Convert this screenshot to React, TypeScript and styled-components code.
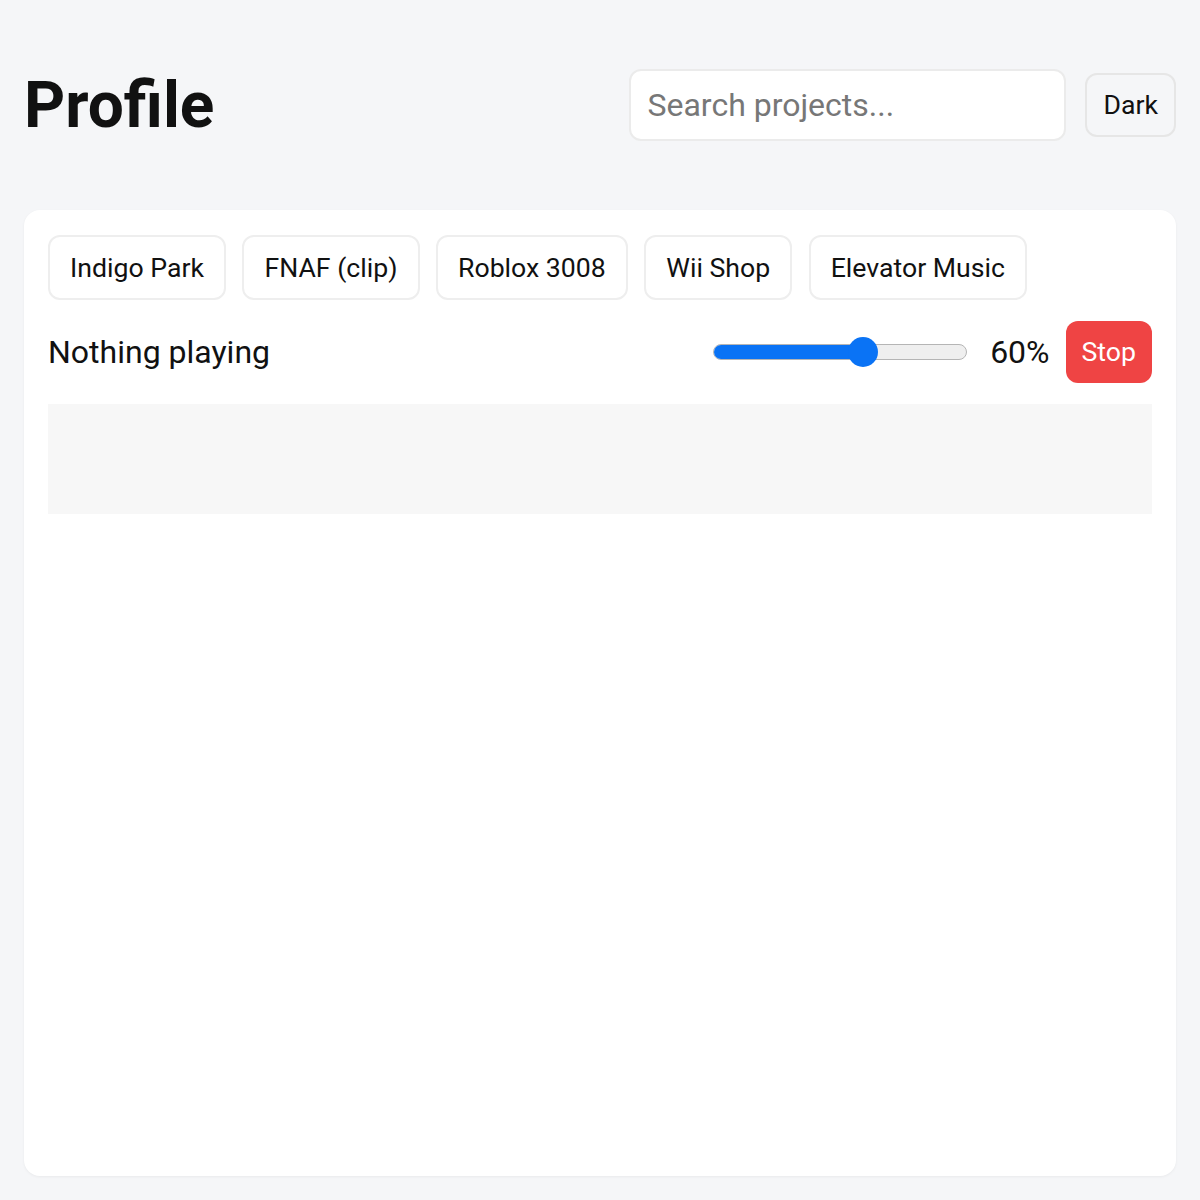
import styled, { createGlobalStyle } from "styled-components";

const GlobalStyle = createGlobalStyle`
  html, body {
    margin: 0;
    padding: 0;
    background: #f5f6f8;
    font-family: Roboto, "Liberation Sans", sans-serif;
    color: #111;
  }
  * {
    box-sizing: border-box;
  }
`;

const Page = styled.div`
  min-height: 100vh;
  padding: 24px;
  display: flex;
  flex-direction: column;
`;

const Header = styled.header`
  display: flex;
  align-items: center;
  justify-content: space-between;
  margin-bottom: 24px;
`;

const Title = styled.h1`
  font-size: 64px;
  font-weight: 700;
  margin: 43.5px 0;
  line-height: 75px;
  color: #111;
`;

const Tools = styled.div`
  display: flex;
  align-items: center;
  gap: 19px;
`;

const Search = styled.input`
  width: 437px;
  height: 72px;
  padding: 0 16px;
  border: 2px solid #ebebeb;
  border-radius: 12px;
  background: #fff;
  font-family: inherit;
  font-size: 32px;
  color: #111;
  outline: none;
  &::placeholder {
    color: #777;
  }
`;

const GhostButton = styled.button`
  height: 64px;
  padding: 0 16px;
  border: 2px solid #e6e6e6;
  border-radius: 12px;
  background: #f5f6f8;
  font-family: inherit;
  font-size: 26.67px;
  color: #111;
`;

const Card = styled.main`
  flex: 1;
  background: #fff;
  border-radius: 16px;
  padding: 25px 24px 24px;
  box-shadow: 0 1px 3px rgba(0, 0, 0, 0.05);
  display: flex;
  flex-direction: column;
  gap: 21px;
`;

const Chips = styled.div`
  display: flex;
  flex-wrap: wrap;
  gap: 16.5px;
`;

const Chip = styled.button`
  height: 65px;
  padding: 0 20px;
  border: 2px solid #eeeeee;
  border-radius: 12px;
  background: #fff;
  font-family: inherit;
  font-size: 26.67px;
  color: #111;
`;

const PlayerRow = styled.div`
  display: flex;
  align-items: center;
  height: 62px;
`;

const NowPlaying = styled.div`
  flex: 1;
  font-size: 32px;
  color: #111;
`;

const Slider = styled.div`
  position: relative;
  width: 254px;
  height: 30px;
  margin-right: 23px;
`;

const Track = styled.div`
  position: absolute;
  left: 0;
  right: 0;
  top: 7px;
  height: 16px;
  border-radius: 8px;
  background: #efefef;
  border: 1.5px solid #b5b5b5;
  overflow: hidden;
`;

const Fill = styled.div`
  height: 100%;
  background: #0a73f5;
`;

const Thumb = styled.div`
  position: absolute;
  top: 0;
  width: 30px;
  height: 30px;
  border-radius: 50%;
  background: #0a73f5;
`;

const Volume = styled.span`
  font-size: 32px;
  color: #111;
  margin-right: 16px;
`;

const StopButton = styled.button`
  height: 62px;
  padding: 0 16px;
  border: none;
  border-radius: 12px;
  background: #ef4444;
  color: #fff;
  font-family: inherit;
  font-size: 26.67px;
`;

const Visualizer = styled.div`
  height: 110px;
  background: #f7f7f7;
`;

const projects = ["Indigo Park", "FNAF (clip)", "Roblox 3008", "Wii Shop", "Elevator Music"];

export default function App() {
  const volume = 0.6;
  const travel = 254 - 30;
  return (
    <>
      <GlobalStyle />
      <Page>
        <Header>
          <Title>Profile</Title>
          <Tools>
            <Search placeholder="Search projects..." />
            <GhostButton>Dark</GhostButton>
          </Tools>
        </Header>
        <Card>
          <Chips>
            {projects.map((p) => (
              <Chip key={p}>{p}</Chip>
            ))}
          </Chips>
          <PlayerRow>
            <NowPlaying>Nothing playing</NowPlaying>
            <Slider>
              <Track>
                <Fill style={{ width: travel * volume + 15 }} />
              </Track>
              <Thumb style={{ left: travel * volume }} />
            </Slider>
            <Volume>60%</Volume>
            <StopButton>Stop</StopButton>
          </PlayerRow>
          <Visualizer />
        </Card>
      </Page>
    </>
  );
}
